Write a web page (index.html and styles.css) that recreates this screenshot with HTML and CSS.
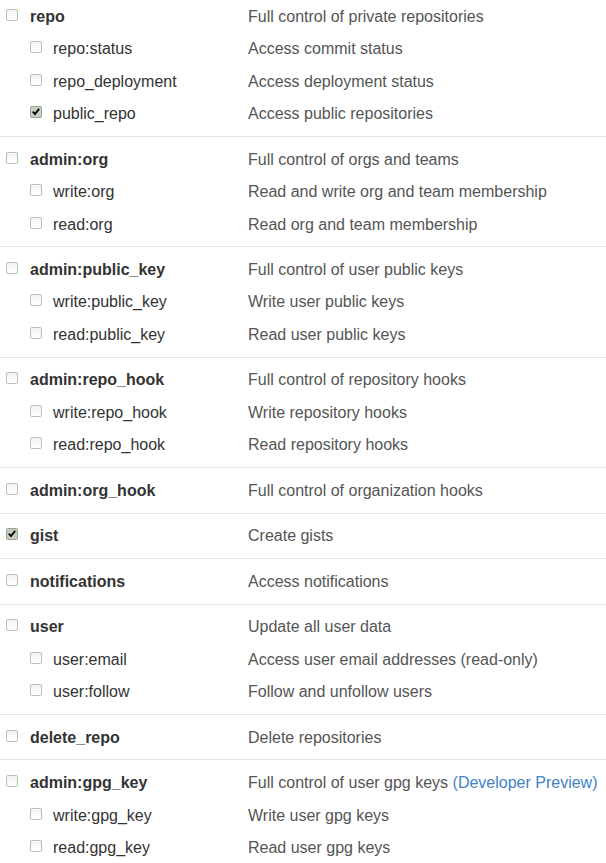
FILE: index.html
```html
<!DOCTYPE html>
<html>
<head>
<meta charset="utf-8">
<link rel="stylesheet" href="styles.css">
</head>
<body>
<div class="scopes">
  <div class="group first">
    <div class="row top"><span class="label"><span class="cb"></span><b>repo</b></span><span class="desc">Full control of private repositories</span></div>
    <div class="row sub"><span class="label"><span class="cb"></span>repo:status</span><span class="desc">Access commit status</span></div>
    <div class="row sub"><span class="label"><span class="cb"></span>repo_deployment</span><span class="desc">Access deployment status</span></div>
    <div class="row sub"><span class="label"><span class="cb checked"><svg viewBox="0 0 11 11"><path d="M2 5.2 L4.3 7.8 L9 2" fill="none" stroke="#000" stroke-width="2"/></svg></span>public_repo</span><span class="desc">Access public repositories</span></div>
  </div>
  <div class="group">
    <div class="row top"><span class="label"><span class="cb"></span><b>admin:org</b></span><span class="desc">Full control of orgs and teams</span></div>
    <div class="row sub"><span class="label"><span class="cb"></span>write:org</span><span class="desc">Read and write org and team membership</span></div>
    <div class="row sub"><span class="label"><span class="cb"></span>read:org</span><span class="desc">Read org and team membership</span></div>
  </div>
  <div class="group">
    <div class="row top"><span class="label"><span class="cb"></span><b>admin:public_key</b></span><span class="desc">Full control of user public keys</span></div>
    <div class="row sub"><span class="label"><span class="cb"></span>write:public_key</span><span class="desc">Write user public keys</span></div>
    <div class="row sub"><span class="label"><span class="cb"></span>read:public_key</span><span class="desc">Read user public keys</span></div>
  </div>
  <div class="group">
    <div class="row top"><span class="label"><span class="cb"></span><b>admin:repo_hook</b></span><span class="desc">Full control of repository hooks</span></div>
    <div class="row sub"><span class="label"><span class="cb"></span>write:repo_hook</span><span class="desc">Write repository hooks</span></div>
    <div class="row sub"><span class="label"><span class="cb"></span>read:repo_hook</span><span class="desc">Read repository hooks</span></div>
  </div>
  <div class="group">
    <div class="row top"><span class="label"><span class="cb"></span><b>admin:org_hook</b></span><span class="desc">Full control of organization hooks</span></div>
  </div>
  <div class="group">
    <div class="row top"><span class="label"><span class="cb checked"><svg viewBox="0 0 11 11"><path d="M2 5.2 L4.3 7.8 L9 2" fill="none" stroke="#000" stroke-width="2"/></svg></span><b>gist</b></span><span class="desc">Create gists</span></div>
  </div>
  <div class="group">
    <div class="row top"><span class="label"><span class="cb"></span><b>notifications</b></span><span class="desc">Access notifications</span></div>
  </div>
  <div class="group">
    <div class="row top"><span class="label"><span class="cb"></span><b>user</b></span><span class="desc">Update all user data</span></div>
    <div class="row sub"><span class="label"><span class="cb"></span>user:email</span><span class="desc">Access user email addresses (read-only)</span></div>
    <div class="row sub"><span class="label"><span class="cb"></span>user:follow</span><span class="desc">Follow and unfollow users</span></div>
  </div>
  <div class="group">
    <div class="row top"><span class="label"><span class="cb"></span><b>delete_repo</b></span><span class="desc">Delete repositories</span></div>
  </div>
  <div class="group">
    <div class="row top"><span class="label"><span class="cb"></span><b>admin:gpg_key</b></span><span class="desc">Full control of user gpg keys <a class="preview">(Developer Preview)</a></span></div>
    <div class="row sub"><span class="label"><span class="cb"></span>write:gpg_key</span><span class="desc">Write user gpg keys</span></div>
    <div class="row sub"><span class="label"><span class="cb"></span>read:gpg_key</span><span class="desc">Read user gpg keys</span></div>
  </div>
</div>
</body>
</html>
```

FILE: styles.css
```css
html, body {
  margin: 0;
  padding: 0;
  background: #fff;
}
body {
  font-family: "Liberation Sans", Arial, sans-serif;
  font-size: 16px;
  color: #333;
}
.scopes {
  display: flex;
  flex-direction: column;
}
.group {
  border-top: 1px solid #e5e5e5;
  padding: 6px 0;
}
.group.first {
  border-top: 0;
  padding-top: 0;
}
.row {
  box-sizing: border-box;
  display: grid;
  grid-template-columns: 248px 1fr;
  height: 32.47px;
  padding-top: 1px;
  align-items: center;
  white-space: nowrap;
}
.label {
  display: flex;
  align-items: center;
  color: #333;
}
.row.top .label {
  padding-left: 6px;
}
.row.sub .label {
  padding-left: 30px;
}
.label b {
  font-weight: bold;
  color: #333;
}
.cb {
  box-sizing: border-box;
  width: 12px;
  height: 12px;
  border: 1px solid #b7c3b2;
  border-radius: 2px;
  background: linear-gradient(#f2f2f2, #ffffff);
  margin-right: 12px;
  margin-top: -4px;
  flex: none;
  display: flex;
  align-items: center;
  justify-content: center;
}
.row.sub .cb {
  margin-right: 11px;
}
.cb.checked {
  background: #c6cec2;
  border-color: #98a494;
}
.cb svg {
  width: 10px;
  height: 10px;
}
.desc {
  color: #555;
}
.preview {
  color: #4183c4;
}
```
